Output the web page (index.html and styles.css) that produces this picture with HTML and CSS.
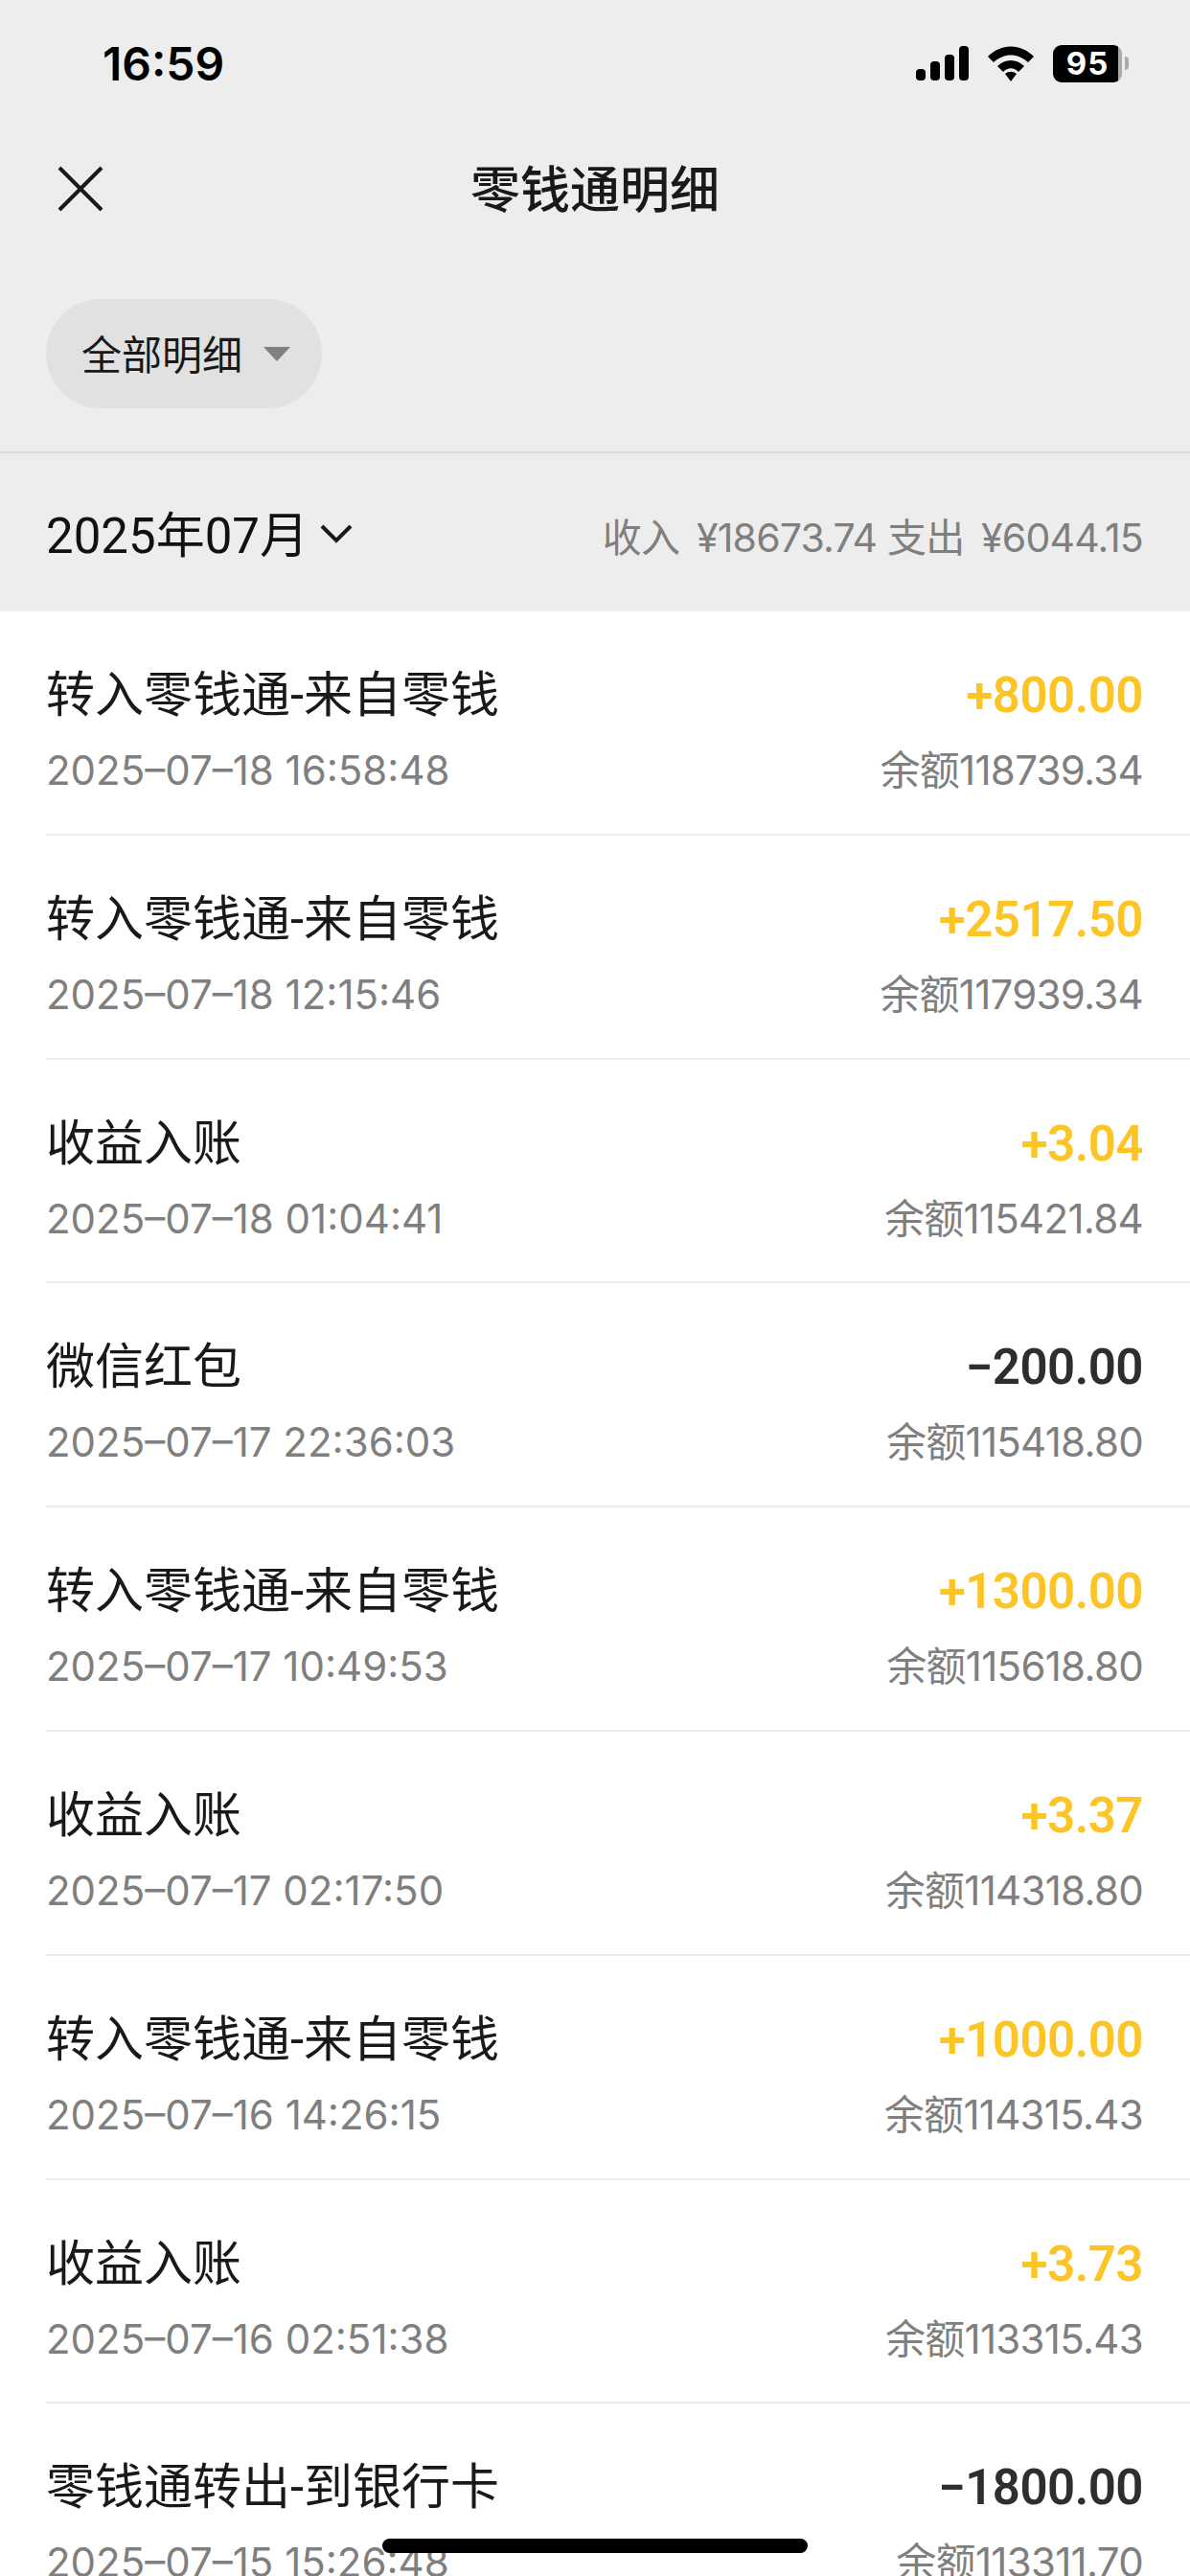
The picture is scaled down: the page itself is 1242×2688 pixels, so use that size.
FILE: index.html
```html
<!DOCTYPE html>
<html lang="zh-CN">
<head>
    <meta charset="UTF-8">
    <meta name="viewport" content="width=device-width, initial-scale=1.0">
    <title>零钱通明细</title>
    <link rel="stylesheet" href="styles.css">
</head>
<body>
    <header class="top">
        <div class="status">
            <span class="clock">16:59</span>
            <div class="status-icons">
                <svg class="signal" width="55" height="36" viewBox="0 0 55 36">
                    <rect x="0" y="24" width="10" height="12" rx="4"/>
                    <rect x="15" y="16" width="10" height="20" rx="4"/>
                    <rect x="30" y="9" width="10" height="27" rx="4"/>
                    <rect x="45" y="0" width="10" height="36" rx="4"/>
                </svg>
                <svg class="wifi" width="48" height="37" viewBox="0 0 48 37">
                    <path d="M0 11 C14 -3 34 -3 48 11 L42 17 C31 7 17 7 6 17 Z"/>
                    <path d="M10 21 C18 13 30 13 38 21 L32 27 C27 22 21 22 16 27 Z"/>
                    <path d="M18 29 C22 26 26 26 30 29 L24 37 Z"/>
                </svg>
                <div class="battery"><span class="battery-num">95</span></div>
                <div class="battery-tip"></div>
            </div>
        </div>
        <div class="nav">
            <svg class="close" width="48" height="48" viewBox="0 0 48 48">
                <path d="M2 2 L46 46 M46 2 L2 46"/>
            </svg>
            <h1 class="nav-title">零钱通明细</h1>
        </div>
        <div class="filter-row">
            <div class="filter">全部明细<span class="filter-arrow"></span></div>
        </div>
    </header>

    <section class="month">
        <div class="month-left">
            <span class="month-name">2025年07月</span>
            <svg width="34" height="22" viewBox="0 0 34 22">
                <path d="M2 3 L17 18 L32 3"/>
            </svg>
        </div>
        <div class="month-sum"><span class="sum-label">收入</span> ¥18673.74 <span class="sum-label">支出</span> ¥6044.15</div>
    </section>

    <main class="list">
        <div class="item">
            <div class="line"><span class="name">转入零钱通-来自零钱</span><span class="amount plus">+800.00</span></div>
            <div class="line sub"><span>2025–07–18 16:58:48</span><span class="balance">余额118739.34</span></div>
        </div>
        <div class="item">
            <div class="line"><span class="name">转入零钱通-来自零钱</span><span class="amount plus">+2517.50</span></div>
            <div class="line sub"><span>2025–07–18 12:15:46</span><span class="balance">余额117939.34</span></div>
        </div>
        <div class="item">
            <div class="line"><span class="name">收益入账</span><span class="amount plus">+3.04</span></div>
            <div class="line sub"><span>2025–07–18 01:04:41</span><span class="balance">余额115421.84</span></div>
        </div>
        <div class="item">
            <div class="line"><span class="name">微信红包</span><span class="amount">−200.00</span></div>
            <div class="line sub"><span>2025–07–17 22:36:03</span><span class="balance">余额115418.80</span></div>
        </div>
        <div class="item">
            <div class="line"><span class="name">转入零钱通-来自零钱</span><span class="amount plus">+1300.00</span></div>
            <div class="line sub"><span>2025–07–17 10:49:53</span><span class="balance">余额115618.80</span></div>
        </div>
        <div class="item">
            <div class="line"><span class="name">收益入账</span><span class="amount plus">+3.37</span></div>
            <div class="line sub"><span>2025–07–17 02:17:50</span><span class="balance">余额114318.80</span></div>
        </div>
        <div class="item">
            <div class="line"><span class="name">转入零钱通-来自零钱</span><span class="amount plus">+1000.00</span></div>
            <div class="line sub"><span>2025–07–16 14:26:15</span><span class="balance">余额114315.43</span></div>
        </div>
        <div class="item">
            <div class="line"><span class="name">收益入账</span><span class="amount plus">+3.73</span></div>
            <div class="line sub"><span>2025–07–16 02:51:38</span><span class="balance">余额113315.43</span></div>
        </div>
        <div class="item">
            <div class="line"><span class="name">零钱通转出-到银行卡</span><span class="amount">−1800.00</span></div>
            <div class="line sub"><span>2025–07–15 15:26:48</span><span class="balance">余额113311.70</span></div>
        </div>
    </main>

    <div class="home-bar"></div>
</body>
</html>
```

FILE: styles.css
```css
html, body {
    margin: 0;
    padding: 0;
}
body {
    width: 1242px;
    height: 2688px;
    overflow: hidden;
    background-color: #fff;
    color: #191919;
    font-family: Inter, "Noto Sans CJK SC", sans-serif;
}
.top {
    background-color: #ededed;
    height: 471px;
    border-bottom: 2px solid #dcdcdc;
}
.status {
    height: 133px;
    display: flex;
    justify-content: space-between;
    align-items: center;
    padding: 0 64px 0 107px;
}
.clock {
    font-size: 48px;
    font-weight: 600;
    color: #000;
    margin-top: -1px;
}
.status-icons {
    display: flex;
    align-items: center;
    margin-top: -1px;
}
.signal, .wifi {
    fill: #000;
}
.signal {
    margin-right: 20px;
}
.wifi {
    margin-right: 20px;
}
.battery {
    width: 72px;
    height: 39px;
    background: linear-gradient(to right, #000 68px, #aaa 68px);
    border-radius: 9px;
    display: flex;
    align-items: center;
    justify-content: center;
}
.battery-num {
    color: #fff;
    font-size: 33px;
    font-weight: 700;
    line-height: 1;
    letter-spacing: 1px;
}
.battery-tip {
    width: 4px;
    height: 14px;
    background-color: #aaa;
    border-radius: 0 7px 7px 0;
    margin-left: 3px;
}
.nav {
    height: 64px;
    margin-top: 32px;
    display: flex;
    align-items: center;
    justify-content: center;
    position: relative;
}
.close {
    position: absolute;
    left: 60px;
    top: 8px;
    fill: none;
    stroke: #191919;
    stroke-width: 4;
}
.nav-title {
    margin: -6px 0 0;
    font-size: 52px;
    font-weight: 500;
    color: #191919;
}
.filter-row {
    padding: 83px 0 0 48px;
}
.filter {
    display: inline-flex;
    align-items: center;
    width: 288px;
    height: 114px;
    box-sizing: border-box;
    padding: 0 0 4px 37px;
    border-radius: 57px;
    background-color: #e1e1e1;
    font-size: 42px;
    color: #191919;
}
.filter-arrow {
    width: 0;
    height: 0;
    margin-left: 22px;
    margin-top: 4px;
    border-left: 14px solid transparent;
    border-right: 14px solid transparent;
    border-top: 15px solid #808080;
}
.month {
    height: 165px;
    background-color: #ededed;
    display: flex;
    align-items: center;
    justify-content: space-between;
    padding: 0 49px 0 48px;
}
.month-left {
    display: flex;
    align-items: center;
    gap: 12px;
}
.month-left svg {
    fill: none;
    stroke: #191919;
    stroke-width: 4;
    margin-top: 2px;
}
.month-name {
    font-family: Roboto, "Noto Sans CJK SC", sans-serif;
    font-size: 51px;
    color: #111;
    margin-top: -2px;
}
.month-sum {
    font-size: 41px;
    color: #7f7f7f;
    margin-top: 4px;
    letter-spacing: -0.8px;
}
.sum-label {
    margin-right: 7px;
}
.list {
    padding-left: 48px;
}
.item {
    height: 233.8px;
    box-sizing: border-box;
    border-bottom: 2px solid #ececec;
    padding: 46px 49px 0 0;
}
.line {
    display: flex;
    justify-content: space-between;
    align-items: baseline;
    height: 64px;
}
.name {
    font-family: Roboto, "Noto Sans CJK SC", sans-serif;
    font-size: 51px;
    color: #191919;
}
.amount {
    font-family: Roboto, sans-serif;
    font-size: 51px;
    font-weight: 600;
    color: #2e2e2e;
    letter-spacing: -0.5px;
    margin-top: -2px;
}
.amount.plus {
    color: #fcc525;
}
.sub {
    margin-top: 22px;
    font-size: 42px;
    color: #7f7f7f;
}
.balance {
    letter-spacing: -0.7px;
}
.home-bar {
    position: absolute;
    left: 399px;
    top: 2649px;
    width: 444px;
    height: 15px;
    border-radius: 8px;
    background-color: #000;
}
```
